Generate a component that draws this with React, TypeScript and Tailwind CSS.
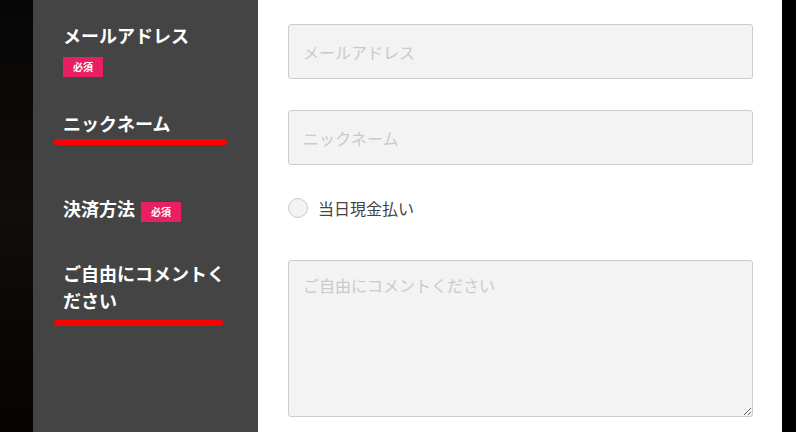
const font = { fontFamily: '"Noto Sans CJK JP", "Noto Sans", sans-serif' }

function Badge() {
  return (
    <span className="inline-flex h-[20px] w-[40px] items-center justify-center bg-[#e91e63] text-[10px] font-bold leading-none text-white">
      必須
    </span>
  )
}

function Underline({ width }: { width: string }) {
  return <div className={`ml-[-9px] h-[6px] rounded-full bg-[#ff0000] ${width}`} />
}

export default function App() {
  const fieldCls =
    'block w-[465px] rounded-[3px] border border-[#cccccc] bg-[#f3f3f3] px-[14px] text-[16px] text-[#444] outline-none placeholder:text-[#cacaca]'

  return (
    <div className="flex h-[432px] w-[796px] overflow-hidden bg-black" style={font}>
      {/* dark backdrop on the left */}
      <div className="w-[33px] shrink-0 bg-gradient-to-b from-[#070606] via-[#100e0b] to-[#050403]" />

      <div className="grid w-[749px] shrink-0 grid-cols-[225px_524px] grid-rows-[110px_88px_62px_1fr]">
        {/* メールアドレス */}
        <div className="bg-[#444444] pl-[30px] pr-[30px] pt-[22px]">
          <p className="text-[18px] font-bold leading-[27px] text-white">メールアドレス</p>
          <div className="mt-[8px] flex">
            <Badge />
          </div>
        </div>
        <div className="bg-white pl-[30px] pt-[24px]">
          <input className={`${fieldCls} h-[55px]`} placeholder="メールアドレス" />
        </div>

        {/* ニックネーム */}
        <div className="bg-[#444444] pl-[30px] pr-[30px]">
          <p className="text-[18px] font-bold leading-[27px] text-white">ニックネーム</p>
          <div className="mt-[2px]">
            <Underline width="w-[173px]" />
          </div>
        </div>
        <div className="bg-white pl-[30px]">
          <input className={`${fieldCls} h-[55px]`} placeholder="ニックネーム" />
        </div>

        {/* 決済方法 */}
        <div className="bg-[#444444] pl-[30px] pr-[30px]">
          <div className="flex items-start gap-[6px]">
            <p className="mt-[-2px] text-[18px] font-bold leading-[24px] text-white">決済方法</p>
            <div className="mt-[4px] flex">
              <Badge />
            </div>
          </div>
        </div>
        <div className="bg-white pl-[30px]">
          <label className="flex items-center gap-[10px]">
            <span className="h-[20px] w-[20px] rounded-full border border-[#cccccc] bg-[#f3f3f3]" />
            <span className="text-[16px] leading-[20px] text-[#444]">当日現金払い</span>
          </label>
        </div>

        {/* コメント */}
        <div className="bg-[#444444] pl-[30px] pr-[30px]">
          <p className="text-[18px] font-bold leading-[27px] text-white">ご自由にコメントください</p>
          <div className="mt-[6px]">
            <Underline width="w-[169px]" />
          </div>
        </div>
        <div className="bg-white pl-[30px]">
          <textarea
            className={`${fieldCls} h-[157px] py-[10px] leading-[28px]`}
            placeholder="ご自由にコメントください"
          />
        </div>
      </div>

      <div className="flex-1 bg-black" />
    </div>
  )
}
